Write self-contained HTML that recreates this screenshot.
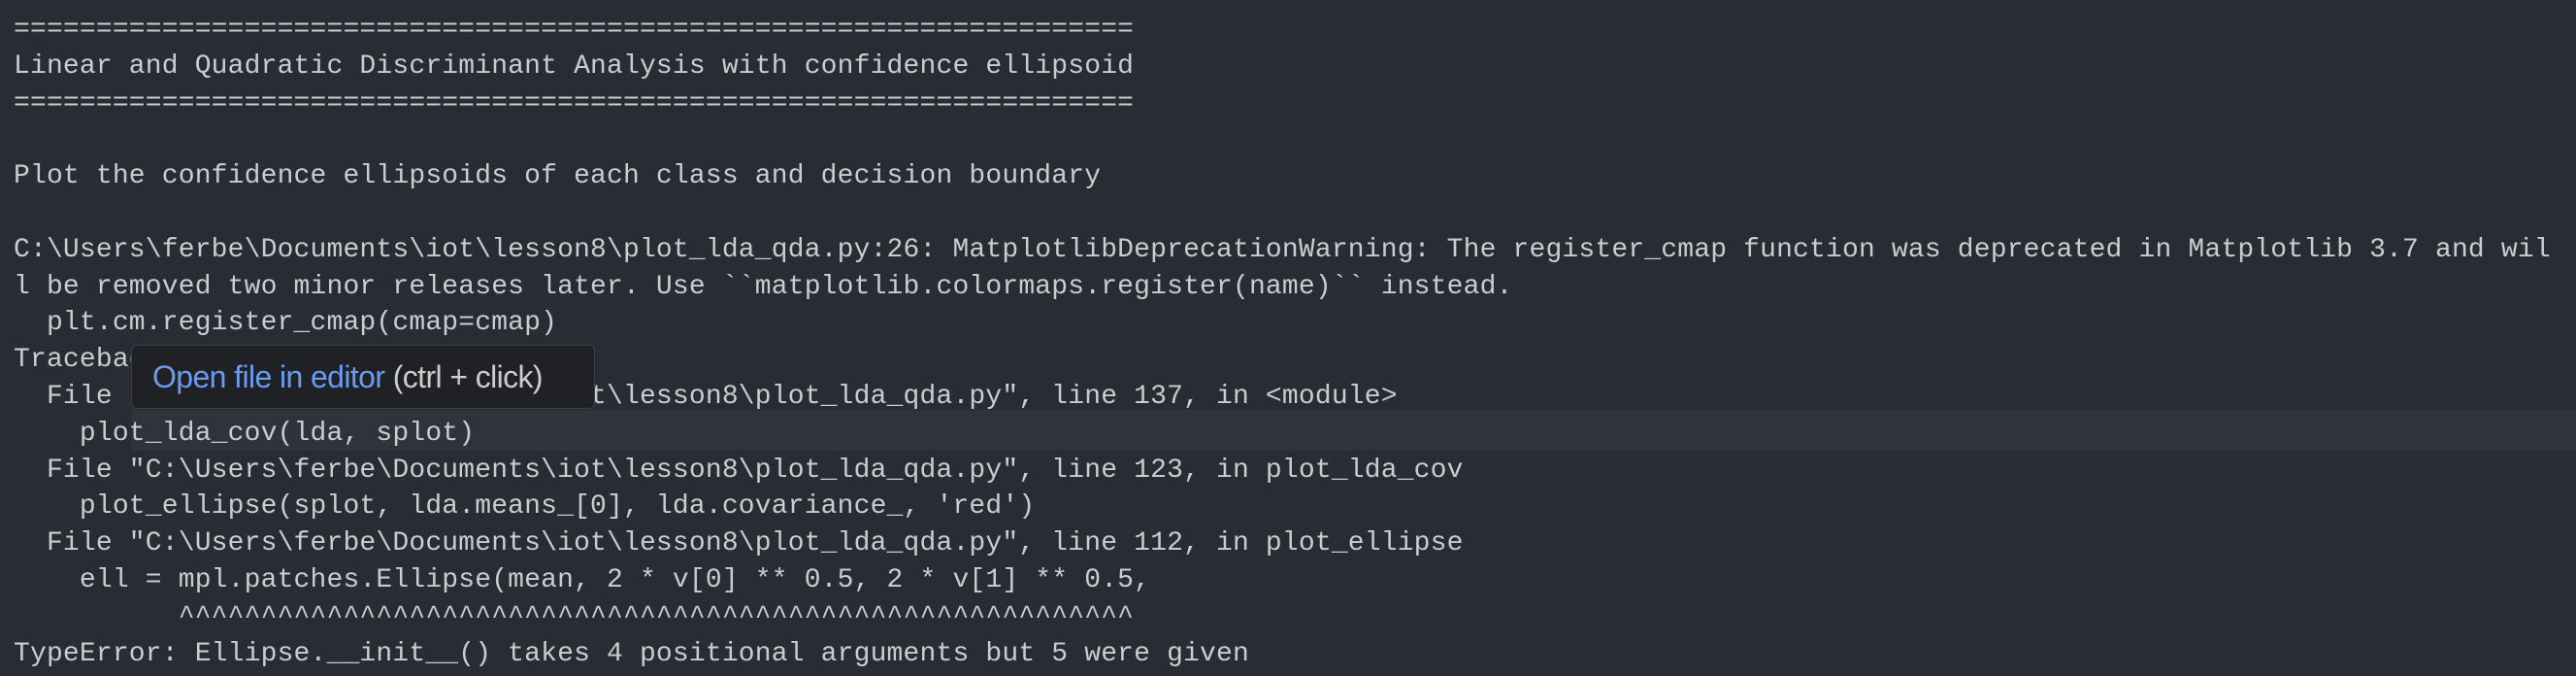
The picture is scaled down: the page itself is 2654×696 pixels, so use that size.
<!DOCTYPE html>
<html><head><meta charset="utf-8"><style>
html,body{margin:0;padding:0;background:#282c34;width:2654px;height:696px;overflow:hidden;position:relative}
pre{margin:0;position:absolute;left:14px;top:12px;font-family:"Liberation Mono",monospace;font-size:28px;letter-spacing:0.17px;line-height:37.8px;color:#cccccc;white-space:pre}
.band{position:absolute;left:135px;right:0;top:422px;height:42px;background:#2f333c}
.tip{position:absolute;left:135px;top:355px;width:478px;height:66px;background:#202124;border:1px solid #3c3f44;border-radius:6px;box-sizing:border-box;font-family:"Liberation Sans",sans-serif;font-size:32px;line-height:64px;padding-left:21px;color:#cccccc;white-space:nowrap;letter-spacing:-0.6px}
.tip span{color:#6b9bf0}
</style></head><body>
<div class="band"></div>
<pre>====================================================================
Linear and Quadratic Discriminant Analysis with confidence ellipsoid
====================================================================

Plot the confidence ellipsoids of each class and decision boundary

C:\Users\ferbe\Documents\iot\lesson8\plot_lda_qda.py:26: MatplotlibDeprecationWarning: The register_cmap function was deprecated in Matplotlib 3.7 and wil
l be removed two minor releases later. Use ``matplotlib.colormaps.register(name)`` instead.
  plt.cm.register_cmap(cmap=cmap)
Traceback (most recent call last):
  File "C:\Users\ferbe\Documents\iot\lesson8\plot_lda_qda.py", line 137, in &lt;module&gt;
    plot_lda_cov(lda, splot)
  File "C:\Users\ferbe\Documents\iot\lesson8\plot_lda_qda.py", line 123, in plot_lda_cov
    plot_ellipse(splot, lda.means_[0], lda.covariance_, 'red')
  File "C:\Users\ferbe\Documents\iot\lesson8\plot_lda_qda.py", line 112, in plot_ellipse
    ell = mpl.patches.Ellipse(mean, 2 * v[0] ** 0.5, 2 * v[1] ** 0.5,
          ^^^^^^^^^^^^^^^^^^^^^^^^^^^^^^^^^^^^^^^^^^^^^^^^^^^^^^^^^^
TypeError: Ellipse.__init__() takes 4 positional arguments but 5 were given</pre>
<div class="tip"><span>Open file in editor</span> (ctrl + click)</div>
</body></html>
